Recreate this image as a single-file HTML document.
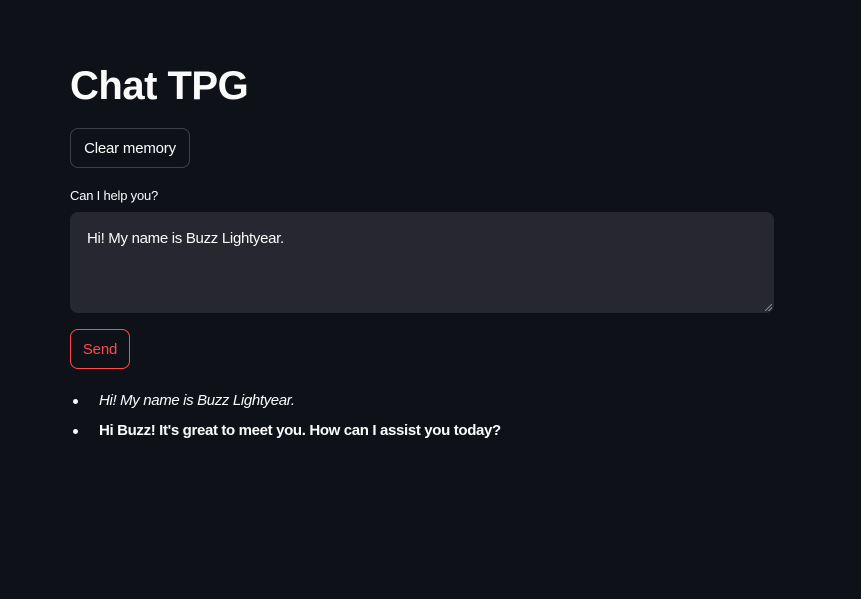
<!DOCTYPE html>
<html><head><meta charset="utf-8"><style>
*{box-sizing:border-box;margin:0;padding:0}
html,body{width:861px;height:599px;background:#0e1117;color:#fafafa;font-family:"Liberation Sans",sans-serif;overflow:hidden}
.w{position:absolute;left:70px;top:0;width:704px}
h1{position:absolute;top:62px;left:0;font-size:40px;font-weight:bold;letter-spacing:-0.5px;line-height:48px}
.btn{position:absolute;border:1px solid rgba(250,250,250,0.2);border-radius:8px;font-size:15px;display:flex;align-items:center;justify-content:center;letter-spacing:-0.2px}
.b1{top:128px;left:0;width:120px;height:40px;color:#fafafa}
.b2{top:329px;left:0;width:60px;height:40px;color:#ff4b4b;border-color:#ff4b4b}
.lab{position:absolute;top:188px;left:0;font-size:13px;letter-spacing:-0.2px}
.ta{position:absolute;top:212px;left:0;width:704px;height:101px;background:#262730;border-radius:8px;padding:18px 17px;font-size:15px;letter-spacing:-0.3px}
.grip{position:absolute;right:2px;bottom:2px;width:7px;height:7px;background:linear-gradient(135deg,transparent 45%,#888 45%,#888 55%,transparent 55%,transparent 70%,#888 70%,#888 80%,transparent 80%)}
ul{position:absolute;top:390px;left:0;list-style:none;font-size:15px;letter-spacing:-0.35px}
li{position:relative;padding-left:29px;height:30px;line-height:22px}
li:before{content:"";position:absolute;left:3px;top:9px;width:5px;height:5px;border-radius:50%;background:#fafafa}
</style></head><body><div class="w">
<h1>Chat TPG</h1>
<div class="btn b1">Clear memory</div>
<div class="lab">Can I help you?</div>
<div class="ta">Hi! My name is Buzz Lightyear.<div class="grip"></div></div>
<div class="btn b2">Send</div>
<ul><li><i>Hi! My name is Buzz Lightyear.</i></li><li><b>Hi Buzz! It's great to meet you. How can I assist you today?</b></li></ul>
</div></body></html>
